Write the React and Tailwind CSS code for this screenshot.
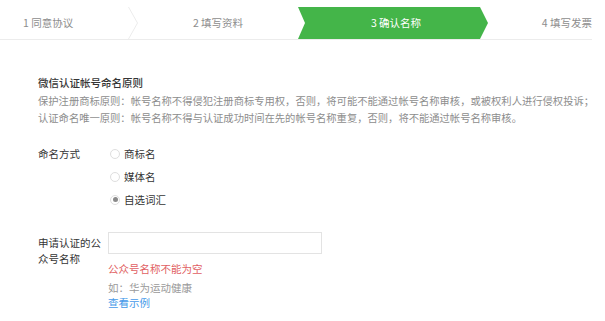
import React from 'react';

const font = { fontFamily: '"Noto Sans CJK SC", "Noto Sans", sans-serif' };

const Radio = ({ label, checked }) => (
  <label className="flex items-center h-[23px]">
    <span className="ml-[2px] mr-[4px] w-[10px] h-[10px] rounded-full border border-[#dedede] bg-white flex items-center justify-center">
      {checked && <span className="w-[5px] h-[5px] rounded-full bg-[#8a8a8a]" />}
    </span>
    <span className="text-[#353535]">{label}</span>
  </label>
);

const Steps = () => (
  <div className="mt-[7px] w-[592px] h-[33px] flex border-b border-[#ececec] text-[10.5px]">
    <div className="w-[128px] flex items-center pl-[23px] text-[#8d8d8d]">1 同意协议</div>
    <svg width="10" height="32" viewBox="0 0 10 32" className="shrink-0">
      <polyline points="0.5,0 9.5,16 0.5,32" fill="none" stroke="#ececec" strokeWidth="1" />
    </svg>
    <div className="w-[160px] flex items-center justify-center text-[#8d8d8d]">2 填写资料</div>
    <div className="w-[190px] h-[32px] flex items-center justify-center pl-[6px] bg-[#44b549] text-white [clip-path:polygon(0_0,182px_0,190px_50%,182px_100%,0_100%,7px_50%)]">
      3 确认名称
    </div>
    <div className="flex-1 flex items-center justify-end text-[#8d8d8d]">4 填写发票</div>
  </div>
);

export default function App() {
  return (
    <div className="w-[605px] h-[321px] bg-white overflow-hidden" style={font}>
      <Steps />
      <div className="pl-[38px] text-[10.5px]">
        <div className="mt-[34px] leading-[18px] font-medium text-[#353535]">微信认证帐号命名原则</div>
        <p className="leading-[17px] text-[10.3px] text-[#8d8d8d]">
          保护注册商标原则：帐号名称不得侵犯注册商标专用权，否则，将可能不能通过帐号名称审核，或被权利人进行侵权投诉；
        </p>
        <p className="leading-[17px] text-[10.3px] text-[#8d8d8d]">
          认证命名唯一原则：帐号名称不得与认证成功时间在先的帐号名称重复，否则，将不能通过帐号名称审核。
        </p>

        <div className="mt-[16px] flex">
          <div className="w-[70px] leading-[23px] text-[#353535]">命名方式</div>
          <div className="flex flex-col">
            <Radio label="商标名" />
            <Radio label="媒体名" />
            <Radio label="自选词汇" checked />
          </div>
        </div>

        <div className="mt-[21px] flex">
          <div className="w-[70px] pt-[3px] pr-[6px] leading-[16px] text-[#353535]">申请认证的公众号名称</div>
          <div className="flex flex-col">
            <input className="w-[214px] h-[22px] border border-[#e3e3e3] outline-none px-[6px]" />
            <div className="mt-[7px] leading-[16px] text-[#e15f63]">公众号名称不能为空</div>
            <div className="mt-[3px] leading-[15px] text-[#9a9a9a]">如：华为运动健康</div>
            <a className="leading-[15px] text-[#459ae9]">查看示例</a>
          </div>
        </div>
      </div>
    </div>
  );
}
